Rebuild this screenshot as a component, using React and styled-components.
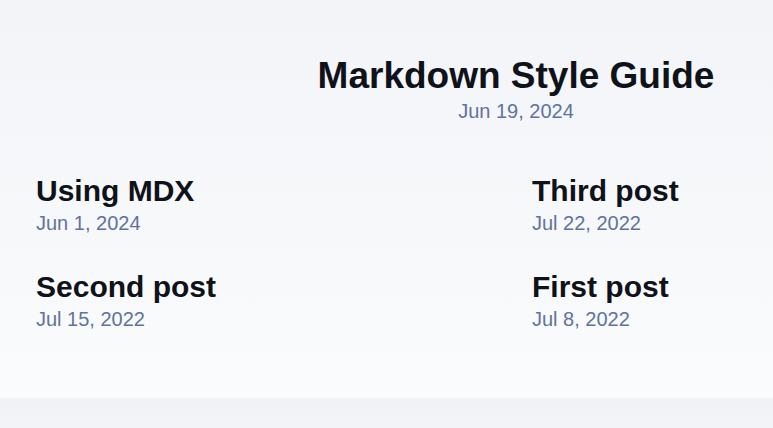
import React from 'react';
import styled, { createGlobalStyle } from 'styled-components';

const GlobalStyle = createGlobalStyle`
  html, body {
    margin: 0;
    padding: 0;
  }
  body {
    font-family: "Liberation Sans", Arial, sans-serif;
    background: linear-gradient(rgba(229, 233, 240, 0.5), #fff) no-repeat;
    background-size: 100% 600px;
    background-color: #fff;
    color: rgb(34, 41, 57);
    line-height: 1.7;
    overflow: hidden;
  }
`;

const S_Main = styled.main`
  width: 960px;
  padding: 57px 0 62px 36px;
`;

const S_List = styled.ul`
  list-style: none;
  margin: 0;
  padding: 0;
  display: flex;
  flex-wrap: wrap;
  gap: 32px;
`;

const S_Item = styled.li`
  width: ${(p) => (p.$featured ? '100%' : 'calc(50% - 16px)')};
  margin-bottom: ${(p) => (p.$featured ? '16px' : '0')};
  text-align: ${(p) => (p.$featured ? 'center' : 'left')};
`;

const S_Link = styled.a`
  display: block;
  text-decoration: none;
`;

const S_Title = styled.h4`
  margin: 0;
  color: rgb(15, 18, 25);
  font-weight: bold;
  line-height: 1;
  font-size: ${(p) => (p.$featured ? '37px' : '30px')};
`;

const S_Date = styled.p`
  margin: 0;
  font-size: 20px;
  color: rgb(96, 115, 159);
`;

const S_Footer = styled.footer`
  padding: 48px 20px 120px;
  background: linear-gradient(rgba(229, 233, 240, 0.5), #fff) no-repeat;
  color: rgb(96, 115, 159);
  text-align: center;
`;

const posts = [
  { title: 'Markdown Style Guide', date: 'Jun 19, 2024' },
  { title: 'Using MDX', date: 'Jun 1, 2024' },
  { title: 'Third post', date: 'Jul 22, 2022' },
  { title: 'Second post', date: 'Jul 15, 2022' },
  { title: 'First post', date: 'Jul 8, 2022' },
];

export default function App() {
  return (
    <>
      <GlobalStyle />
      <S_Main>
        <section>
          <S_List>
            {posts.map((post, i) => (
              <S_Item key={post.title} $featured={i === 0}>
                <S_Link href="#">
                  <S_Title $featured={i === 0}>{post.title}</S_Title>
                  <S_Date>{post.date}</S_Date>
                </S_Link>
              </S_Item>
            ))}
          </S_List>
        </section>
      </S_Main>
      <S_Footer>&copy; 2024 Your name here. All rights reserved.</S_Footer>
    </>
  );
}
